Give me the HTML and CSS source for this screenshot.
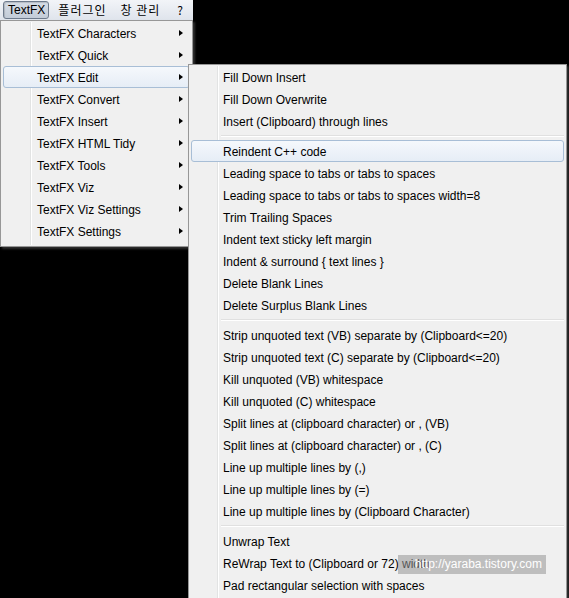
FILE: index.html
```html
<!DOCTYPE html>
<html>
<head>
<meta charset="utf-8">
<link rel="stylesheet" href="styles.css">
</head>
<body>
<div class="screen">
  <div class="menubar">
    <span class="mb-item active">TextFX</span>
    <span class="mb-item">플러그인</span>
    <span class="mb-item">창 관리</span>
    <span class="mb-item">?</span>
  </div>

  <div class="menu menu-main">
    <div class="item sub">TextFX Characters</div>
    <div class="item sub">TextFX Quick</div>
    <div class="item sub hl">TextFX Edit</div>
    <div class="item sub">TextFX Convert</div>
    <div class="item sub">TextFX Insert</div>
    <div class="item sub">TextFX HTML Tidy</div>
    <div class="item sub">TextFX Tools</div>
    <div class="item sub">TextFX Viz</div>
    <div class="item sub">TextFX Viz Settings</div>
    <div class="item sub">TextFX Settings</div>
  </div>

  <div class="menu menu-edit">
    <div class="item">Fill Down Insert</div>
    <div class="item">Fill Down Overwrite</div>
    <div class="item">Insert (Clipboard) through lines</div>
    <div class="sep"></div>
    <div class="item hl">Reindent C++ code</div>
    <div class="item">Leading space to tabs or tabs to spaces</div>
    <div class="item">Leading space to tabs or tabs to spaces width=8</div>
    <div class="item">Trim Trailing Spaces</div>
    <div class="item">Indent text sticky left margin</div>
    <div class="item">Indent &amp; surround { text lines }</div>
    <div class="item">Delete Blank Lines</div>
    <div class="item">Delete Surplus Blank Lines</div>
    <div class="sep"></div>
    <div class="item">Strip unquoted text (VB) separate by (Clipboard&lt;=20)</div>
    <div class="item">Strip unquoted text (C) separate by (Clipboard&lt;=20)</div>
    <div class="item">Kill unquoted (VB) whitespace</div>
    <div class="item">Kill unquoted (C) whitespace</div>
    <div class="item">Split lines at (clipboard character) or , (VB)</div>
    <div class="item">Split lines at (clipboard character) or , (C)</div>
    <div class="item">Line up multiple lines by (,)</div>
    <div class="item">Line up multiple lines by (=)</div>
    <div class="item">Line up multiple lines by (Clipboard Character)</div>
    <div class="sep"></div>
    <div class="item">Unwrap Text</div>
    <div class="item">ReWrap Text to (Clipboard or 72) width</div>
    <div class="item">Pad rectangular selection with spaces</div>
  </div>

  <div class="watermark">http://yaraba.tistory.com</div>
</div>
</body>
</html>
```

FILE: styles.css
```css
html, body {
  margin: 0;
  padding: 0;
  background: #000;
}
.screen {
  position: relative;
  width: 569px;
  height: 598px;
  overflow: hidden;
  background: #000;
  font-family: "Liberation Sans", Tahoma, sans-serif;
  font-size: 12px;
  color: #000;
}
.menubar {
  width: 193px;
  height: 20px;
  display: flex;
  align-items: center;
  background: linear-gradient(#f2f4f8, #dfe4ec);
  box-sizing: border-box;
  padding-left: 3px;
  white-space: nowrap;
  overflow: hidden;
}
.mb-item {
  flex: none;
  white-space: nowrap;
  font-family: "Noto Sans CJK KR", "Liberation Sans", sans-serif;
  font-size: 12px;
  line-height: 14px;
  letter-spacing: 1px;
  padding: 1px 0;
  border: 1px solid transparent;
  color: #000;
}
.mb-item.active {
  font-family: "Liberation Sans", sans-serif;
  letter-spacing: 0;
  border: 1px solid #6d7a8c;
  border-radius: 3px;
  background: linear-gradient(#d6dde7, #c3ccd8);
  box-shadow: inset 1px 1px 1px rgba(0,0,0,0.15);
  padding: 1px 3px 1px 4px;
  margin-right: 8px;
}
.mb-item:nth-child(2) { margin-right: 12px; }
.mb-item:nth-child(3) { margin-right: 15px; }

.menu {
  position: absolute;
  background: #f0f0f0;
  border: 1px solid #979797;
  box-sizing: border-box;
  padding: 1px 2px 2px 2px;
  box-shadow: 2px 2px 2px rgba(80,80,80,0.6);
}
.menu::before {
  content: "";
  position: absolute;
  top: 1px;
  bottom: 1px;
  width: 1px;
  background: #e2e3e3;
  border-right: 1px solid #ffffff;
}
.menu-main {
  left: 0;
  top: 20px;
  width: 193px;
  height: 227px;
}
.menu-main::before { left: 29px; }
.menu-edit {
  left: 188px;
  top: 64px;
  width: 379px;
  height: 560px;
}
.menu-edit::before { left: 28px; }

.item {
  position: relative;
  height: 22px;
  line-height: 18px;
  padding-top: 2px;
  padding-left: 33px;
  white-space: nowrap;
  box-sizing: border-box;
  border: 1px solid transparent;
  border-radius: 3px;
}
.menu-edit .item { padding-left: 31px; }
.item.hl {
  border-color: #a8bed6;
  background: linear-gradient(#f5f8fc, #e6edf6);
}
.item.sub::after {
  content: "";
  position: absolute;
  right: 6px;
  top: 7px;
  width: 0;
  height: 0;
  border-top: 3.5px solid transparent;
  border-bottom: 3.5px solid transparent;
  border-left: 4px solid #000;
}
.sep {
  height: 8px;
  margin-left: 30px;
  position: relative;
}
.sep::after {
  content: "";
  position: absolute;
  left: 0;
  right: 0;
  top: 3px;
  height: 1px;
  background: #e0e0e0;
  border-bottom: 1px solid #fff;
}
.watermark {
  position: absolute;
  left: 398px;
  top: 555px;
  width: 148px;
  height: 19px;
  line-height: 19px;
  background: rgba(150,150,150,0.55);
  color: #fff;
  font-family: "Liberation Sans", sans-serif;
  font-size: 12px;
  text-align: right;
  padding-right: 4px;
  box-sizing: border-box;
  overflow: hidden;
  white-space: nowrap;
}
```
